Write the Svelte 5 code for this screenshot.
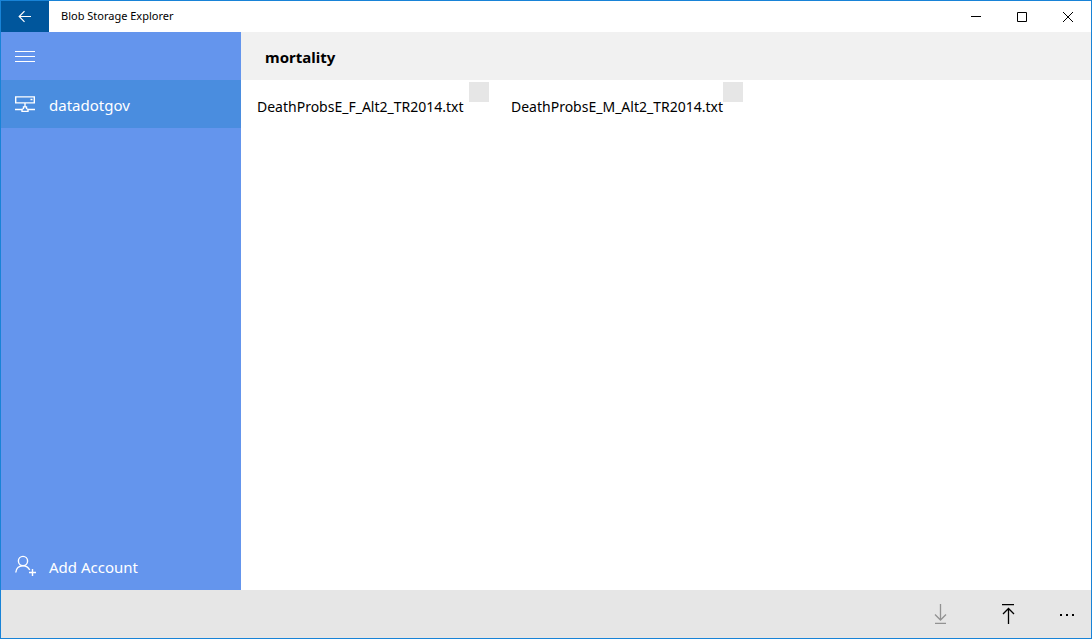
<script lang="ts">
  const files = ['DeathProbsE_F_Alt2_TR2014.txt', 'DeathProbsE_M_Alt2_TR2014.txt'];
  let selected = $state<string[]>([]);
</script>

<div class="window">
  <header class="titlebar">
    <button class="back" aria-label="Back">
      <svg width="14" height="14" viewBox="0 0 14 14"><path d="M13 6.500H1.500M6.500 1.200 1.200 6.500l5.300 5.300" /></svg>
    </button>
    <span class="title">Blob Storage Explorer</span>
    <button class="control" aria-label="Minimize">
      <svg width="10" height="10" viewBox="0 0 10 10"><path d="M0 4.500h10" /></svg>
    </button>
    <button class="control" aria-label="Maximize">
      <svg width="10" height="10" viewBox="0 0 10 10"><path d="M.5.5h9v9h-9z" /></svg>
    </button>
    <button class="control" aria-label="Close">
      <svg width="10" height="10" viewBox="0 0 10 10"><path d="m0 0 10 10M10 0 0 10" /></svg>
    </button>
  </header>

  <div class="body">
    <nav class="sidebar">
      <button class="item" aria-label="Menu">
        <svg class="thin" width="20" height="20" viewBox="0 0 20 20"><path d="M0 5.500h20M0 10.500h20M0 15.500h20" /></svg>
      </button>
      <button class="item active">
        <svg width="20" height="20" viewBox="0 0 20 20">
          <path d="M.7 2.900h18.600v6H.7zM15.500 5.500h2M10 9v3.500M0 15.500h7M13 15.500h7M8.500 12.900h3v1.600L13 15.500v1.900H7v-1.900l1.500-1z" />
        </svg>
        <span>datadotgov</span>
      </button>
      <button class="item add">
        <svg width="22" height="22" viewBox="0 0 22 22">
          <circle cx="8" cy="6" r="4.600" />
          <path d="M.8 17.500c.2-4 3.200-6.800 7.200-6.800 3.200 0 5.500 1.700 6.700 4.300M17.500 14v7M14 17.500h7" />
        </svg>
        <span>Add Account</span>
      </button>
    </nav>

    <main>
      <h1>mortality</h1>
      <div class="files">
        {#each files as file}
          <label class="file">
            <span>{file}</span>
            <input type="checkbox" value={file} bind:group={selected} />
          </label>
        {/each}
      </div>
    </main>
  </div>

  <footer>
    <button class="command" aria-label="Download" disabled>
      <svg width="20" height="20" viewBox="0 0 20 20"><path d="M9.500 0v16M4 10.500l5.500 5.500 5.500-5.500M4 19.300h11" /></svg>
    </button>
    <button class="command" aria-label="Upload">
      <svg width="20" height="20" viewBox="0 0 20 20"><path d="M9.500 20V4.500M4 10 9.500 4.500 15 10M3 .6h12" /></svg>
    </button>
    <button class="more" aria-label="More">
      <svg width="16" height="4" viewBox="0 0 16 4"><path d="M1 2h2v2H1zM7 2h2v2H7zM13 2h2v2h-2z" /></svg>
    </button>
  </footer>
</div>

<style>
  :global(body) {
    margin: 0;
  }
  .window {
    box-sizing: border-box;
    min-height: 100vh;
    display: flex;
    flex-direction: column;
    border: 1px solid #1883d7;
    background: #fff;
    color: #000;
    font-family: 'Noto Sans', 'Open Sans', sans-serif;
  }
  button {
    display: flex;
    align-items: center;
    border: 0;
    padding: 0;
    background: none;
    color: inherit;
    font: inherit;
  }
  svg {
    flex: none;
    fill: none;
    stroke: currentColor;
  }
  .titlebar {
    display: flex;
    height: 31px;
  }
  .back {
    width: 48px;
    justify-content: center;
    background: #00569c;
    color: #fff;
  }
  .back svg {
    stroke-width: 1.2;
  }
  .title {
    flex: 1;
    padding-left: 12px;
    font-size: 11px;
    line-height: 30px;
  }
  .control {
    width: 46px;
    justify-content: center;
  }
  .body {
    flex: 1;
    display: flex;
  }
  .sidebar {
    width: 240px;
    flex: none;
    display: flex;
    flex-direction: column;
    background: #6495ed;
    color: #fff;
  }
  .item {
    height: 48px;
    gap: 14px;
    padding-left: 14px;
    font-size: 15px;
    line-height: 24px;
  }
  .item span {
    padding-top: 2px;
  }
  .active {
    background: #4a8ddf;
  }
  .item svg {
    stroke-width: 1.4;
  }
  .item .thin {
    stroke-width: 1;
  }
  .add {
    gap: 12px;
    margin-top: auto;
  }
  main {
    flex: 1;
    min-width: 0;
  }
  h1 {
    margin: 0;
    padding: 2px 0 0 24px;
    background: #f1f1f1;
    font-size: 15px;
    line-height: 46px;
    font-weight: 700;
  }
  .files {
    display: grid;
    grid-template-columns: repeat(auto-fill, 250px);
    gap: 4px;
  }
  .file {
    position: relative;
    padding: 16px;
    font-size: 14px;
    line-height: 22px;
    white-space: nowrap;
  }
  .file input {
    position: absolute;
    top: 2px;
    right: 2px;
    width: 20px;
    height: 20px;
    margin: 0;
    appearance: none;
    background: #e6e6e6;
  }
  .file input:checked {
    background: #4a8ddf;
  }
  footer {
    display: flex;
    justify-content: flex-end;
    height: 48px;
    background: #e6e6e6;
  }
  .command {
    width: 68px;
    justify-content: center;
  }
  .command svg {
    stroke-width: 1.3;
  }
  .command:disabled {
    color: #929292;
  }
  .more {
    width: 48px;
    justify-content: center;
  }
  .more svg {
    fill: currentColor;
    stroke: none;
  }
</style>
